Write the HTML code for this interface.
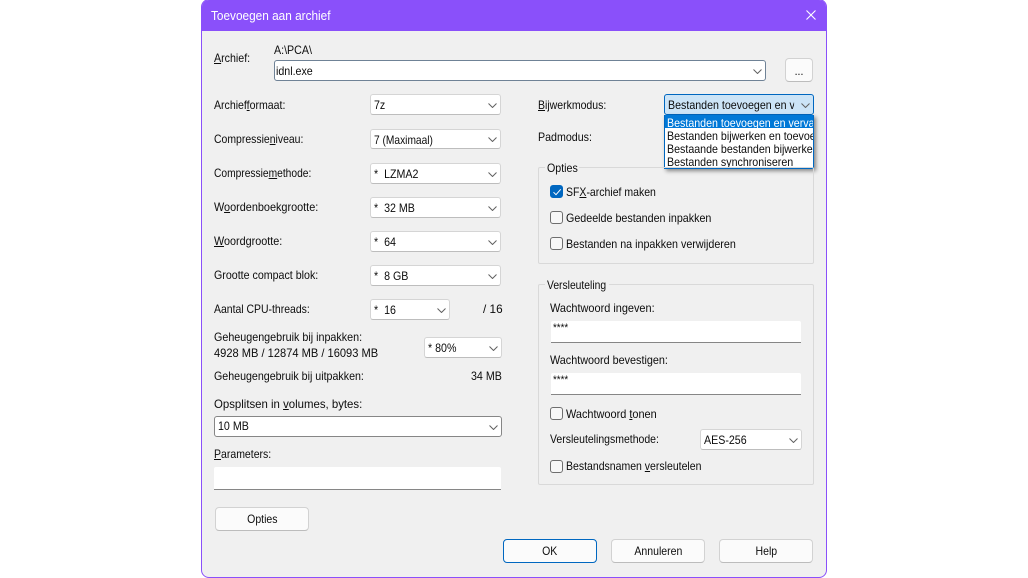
<!DOCTYPE html>
<html lang="nl">
<head>
<meta charset="utf-8">
<title>Toevoegen aan archief</title>
<style>
html,body{margin:0;padding:0;background:#fff;width:1028px;height:578px;overflow:hidden}
*{box-sizing:border-box}
body{font-family:"Liberation Sans",Arial,sans-serif;font-size:12px;color:#0c0c0c}
#win{position:absolute;left:201px;top:-1px;width:626px;height:579px;background:#f0f0f0;border:1px solid #8a50fa;border-radius:8px;overflow:hidden}
#bar{position:absolute;left:-1px;top:0;width:626px;height:31px;background:#8a50fa}
#root{position:absolute;left:0;top:0;width:1028px;height:578px}
.t{position:absolute;line-height:14px;height:14px;white-space:nowrap;font-size:12px;color:#0c0c0c;transform:scaleX(.888);transform-origin:0 50%}
.c{position:absolute;background:#fff;border:1px solid #d5d5d5;border-bottom-color:#bdbdbd;border-radius:3px}
.g{border-color:#868686}
.c svg{position:absolute;right:3px;top:50%;margin-top:-2px;width:9px;height:5px}
.c span{position:absolute;left:3px;top:3px;line-height:14px;white-space:nowrap;font-size:12px;transform:scaleX(.888);transform-origin:0 50%}
.i{position:absolute;background:#fff;border-bottom:1px solid #868686;border-radius:2px 2px 0 0}
.b{position:absolute;background:#fbfbfb;border:1px solid #d2d2d2;border-bottom-color:#bcbcbc;border-radius:4px;text-align:center;line-height:22px;font-size:12px;color:#0c0c0c}
.b span{display:inline-block;transform:scaleX(.875)}
.cb{position:absolute;width:13px;height:13px;border:1px solid #6e6e6e;border-radius:3px;background:#f7f7f7}
.gb{position:absolute;border:1px solid #d9d9d9;border-radius:2px}
.lg{position:absolute;background:#f0f0f0;height:14px}
u{text-underline-offset:1px}
</style>
</head>
<body>
<svg width="0" height="0" style="position:absolute"><defs><symbol id="a" viewBox="0 0 9 5"><path d="M.5.5 4.5 4.5 8.5.5" fill="none" stroke="#606060" stroke-width="1"/></symbol></defs></svg>
<div id="win"><div id="bar"></div></div>
<div id="root">
<div class="t" style="left:211px;top:9px;color:#fff;font-size:12.5px;transform:scaleX(.945)">Toevoegen aan archief</div>
<svg style="position:absolute;left:806px;top:10px" width="10" height="10" viewBox="0 0 10 10"><path d="M.5.5 9.5 9.5M9.5.5 .5 9.5" stroke="#fff" stroke-width="1.1" fill="none"/></svg>

<div class="t" style="left:214px;top:51px"><u>A</u>rchief:</div>
<div class="t" style="left:274px;top:43px">A:\PCA\</div>
<div class="c" style="left:274px;top:60px;width:492px;height:21px;border-color:#6f8296"><span style="left:1px;top:3px">idnl.exe</span><svg><use href="#a"/></svg></div>
<div class="b" style="left:785px;top:58px;width:28px;height:24px;line-height:25px"><span>...</span></div>

<div class="t" style="left:214px;top:98px;transform:scaleX(.88)">Archief<u>f</u>ormaat:</div>
<div class="c" style="left:370px;top:94px;width:131px;height:21px"><span>7z</span><svg><use href="#a"/></svg></div>
<div class="t" style="left:214px;top:132px;transform:scaleX(.87)">Compressie<u>n</u>iveau:</div>
<div class="c" style="left:370px;top:129px;width:131px;height:20px"><span style="transform:scaleX(.85)">7 (Maximaal)</span><svg><use href="#a"/></svg></div>
<div class="t" style="left:214px;top:166px;transform:scaleX(.853)">Compressie<u>m</u>ethode:</div>
<div class="c" style="left:370px;top:163px;width:131px;height:21px"><span>*&nbsp; LZMA2</span><svg><use href="#a"/></svg></div>
<div class="t" style="left:214px;top:200px;transform:scaleX(.905)">W<u>o</u>ordenboekgrootte:</div>
<div class="c" style="left:370px;top:197px;width:131px;height:21px"><span>*&nbsp; 32 MB</span><svg><use href="#a"/></svg></div>
<div class="t" style="left:214px;top:234px;transform:scaleX(.9)"><u>W</u>oordgrootte:</div>
<div class="c" style="left:370px;top:231px;width:131px;height:21px"><span>*&nbsp; 64</span><svg><use href="#a"/></svg></div>
<div class="t" style="left:214px;top:268px">Grootte compact blok:</div>
<div class="c" style="left:370px;top:265px;width:131px;height:21px"><span>*&nbsp; 8 GB</span><svg><use href="#a"/></svg></div>
<div class="t" style="left:214px;top:302px;transform:scaleX(.87)">Aantal CPU-threads:</div>
<div class="c" style="left:370px;top:299px;width:80px;height:21px"><span>*&nbsp; 16</span><svg><use href="#a"/></svg></div>
<div class="t" style="left:483px;top:302px;transform:scaleX(.98)">/ 16</div>
<div class="t" style="left:214px;top:330px;transform:scaleX(.895)">Geheugengebruik bij inpakken:</div>
<div class="t" style="left:214px;top:346px;transform:scaleX(.925)">4928 MB / 12874 MB / 16093 MB</div>
<div class="c" style="left:424px;top:337px;width:78px;height:21px"><span>* 80%</span><svg><use href="#a"/></svg></div>
<div class="t" style="left:214px;top:369px">Geheugengebruik bij uitpakken:</div>
<div class="t" style="left:471px;top:369px">34 MB</div>
<div class="t" style="left:214px;top:397px;transform:scaleX(.95)">Opsplitsen in <u>v</u>olumes, bytes:</div>
<div class="c g" style="left:214px;top:416px;width:288px;height:21px"><span style="left:2.5px;top:2px">10 MB</span><svg><use href="#a"/></svg></div>
<div class="t" style="left:214px;top:447px;transform:scaleX(.875)"><u>P</u>arameters:</div>
<div class="i" style="left:214px;top:467px;width:287px;height:23px"></div>
<div class="b" style="left:215px;top:507px;width:94px;height:24px;line-height:23px"><span>Opties</span></div>

<div class="b" style="left:503px;top:539px;width:94px;height:24px;border:1.5px solid #0067c0;border-bottom-color:#0067c0"><span>OK</span></div>
<div class="b" style="left:611px;top:539px;width:94px;height:24px"><span>Annuleren</span></div>
<div class="b" style="left:719px;top:539px;width:94px;height:24px"><span>Help</span></div>

<div class="t" style="left:538px;top:98px;transform:scaleX(.875)"><u>B</u>ijwerkmodus:</div>
<div class="t" style="left:538px;top:130px">Padmodus:</div>
<div class="c" style="left:664px;top:94px;width:150px;height:21px;background:#cce4f7;border-color:#0067c0;overflow:hidden"><span style="left:3px;top:3px;width:142px;overflow:hidden">Bestanden toevoegen en vervangen</span><svg><use href="#a"/></svg></div>
<div style="position:absolute;left:664px;top:115px;width:150px;height:54px;background:#fff;border:1px solid #0067c0;border-top:0;box-shadow:2px 2px 4px rgba(0,0,0,.45);overflow:hidden">
<div style="position:absolute;left:0;top:0;width:149px;height:13px;background:#0078d7"></div>
<div class="t" style="left:2px;top:1px;color:#fff">Bestanden toevoegen en vervangen</div>
<div class="t" style="left:2px;top:14px">Bestanden bijwerken en toevoegen</div>
<div class="t" style="left:2px;top:27px">Bestaande bestanden bijwerken</div>
<div class="t" style="left:2px;top:40px">Bestanden synchroniseren</div>
</div>

<div class="gb" style="left:538px;top:167px;width:276px;height:97px"></div>
<div class="lg" style="left:545px;top:161px;width:34px"></div>
<div class="t" style="left:547px;top:161px">Opties</div>
<div class="cb" style="left:550px;top:185px;background:#0067c0;border-color:#0067c0"><svg style="position:absolute;left:1px;top:1px" width="10" height="10" viewBox="0 0 10 10"><path d="M1.5 5.2 4 7.7 8.7 2.3" fill="none" stroke="#fff" stroke-width="1"/></svg></div>
<div class="t" style="left:566px;top:185px;transform:scaleX(.875)">SF<u>X</u>-archief maken</div>
<div class="cb" style="left:550px;top:211px"></div>
<div class="t" style="left:566px;top:211px;transform:scaleX(.893)">Gedeelde bestanden inpakken</div>
<div class="cb" style="left:550px;top:237px"></div>
<div class="t" style="left:566px;top:237px;transform:scaleX(.893)">Bestanden na inpakken verwijderen</div>

<div class="gb" style="left:538px;top:284px;width:276px;height:201px"></div>
<div class="lg" style="left:545px;top:278px;width:64px"></div>
<div class="t" style="left:547px;top:278px;transform:scaleX(.86)">Versleuteling</div>
<div class="t" style="left:550px;top:301px;transform:scaleX(.91)">Wachtwoord ingeven:</div>
<div class="i" style="left:551px;top:321px;width:250px;height:22px"></div>
<div class="t" style="left:553px;top:321px;font-size:11px">****</div>
<div class="t" style="left:550px;top:353px;transform:scaleX(.9)">Wachtwoord bevestigen:</div>
<div class="i" style="left:551px;top:373px;width:250px;height:22px"></div>
<div class="t" style="left:553px;top:373px;font-size:11px">****</div>
<div class="cb" style="left:550px;top:407px"></div>
<div class="t" style="left:566px;top:407px;transform:scaleX(.91)">Wachtwoord <u>t</u>onen</div>
<div class="t" style="left:550px;top:432px;transform:scaleX(.873)">Versleutelingsmethode:</div>
<div class="c" style="left:700px;top:429px;width:102px;height:21px"><span>AES-256</span><svg><use href="#a"/></svg></div>
<div class="cb" style="left:550px;top:460px"></div>
<div class="t" style="left:566px;top:459px;transform:scaleX(.875)">Bestandsnamen <u>v</u>ersleutelen</div>
</div>
</body>
</html>
